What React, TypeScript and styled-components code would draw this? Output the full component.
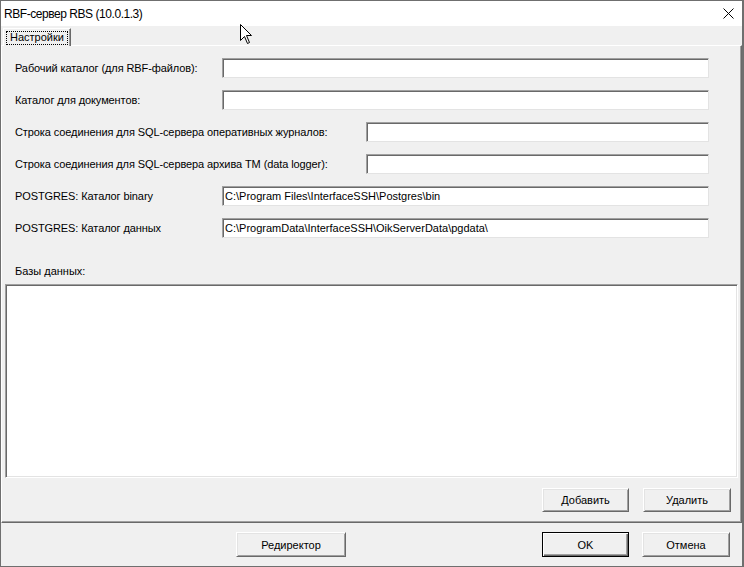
import React from 'react';
import styled, { createGlobalStyle } from 'styled-components';

const GlobalStyle = createGlobalStyle`
  html, body {
    margin: 0;
    padding: 0;
    background: #f0f0f0;
  }
  body {
    font-family: "Liberation Sans", Arial, sans-serif;
    font-size: 11px;
    color: #000;
  }
`;

const Window = styled.div`
  position: relative;
  width: 744px;
  height: 567px;
  box-sizing: border-box;
  border: 1px solid #6f6f6f;
  border-right-width: 2px;
  background: #f0f0f0;
  display: flex;
  flex-direction: column;
  overflow: hidden;
`;

const TitleBar = styled.div`
  height: 25px;
  flex-shrink: 0;
  background: #fff;
  display: flex;
  align-items: center;
  padding: 0 8px 0 3px;
`;

const Title = styled.span`
  flex: 1;
  font-size: 12px;
  letter-spacing: -0.45px;
  color: #000;
`;

const TabStrip = styled.div`
  height: 19px;
  flex-shrink: 0;
  display: flex;
  align-items: flex-end;
  padding-left: 2px;
  position: relative;
  z-index: 1;
`;

const Tab = styled.div`
  height: 18px;
  margin-bottom: -1px;
  box-sizing: border-box;
  padding: 2px 2px 0 2px;
  background: #f0f0f0;
  border-top: 1px solid #fff;
  border-left: 1px solid #fff;
  border-right: 1px solid #696969;
  box-shadow: inset -1px 0 0 #a0a0a0;
`;

const TabLabel = styled.span`
  display: block;
  padding: 0 4px;
  height: 14px;
  line-height: 13px;
  outline: 1px dotted #000;
  outline-offset: -1px;
`;

const Panel = styled.div`
  flex: 1;
  min-height: 0;
  display: flex;
  flex-direction: column;
  box-sizing: border-box;
  border-top: 1px solid #fff;
  border-left: 1px solid #fff;
  border-right: 1px solid #696969;
  border-bottom: 1px solid #696969;
  box-shadow: inset -1px -1px 0 #a0a0a0;
  padding: 12px 3px 10px 3px;
`;

const Form = styled.div`
  display: flex;
  flex-direction: column;
  gap: 12px;
  padding: 0 29px 0 10px;
`;

const Row = styled.div`
  display: flex;
  align-items: center;
  height: 20px;
`;

const Label = styled.span<{ $width: number }>`
  width: ${(p) => p.$width}px;
  flex-shrink: 0;
  white-space: nowrap;
  letter-spacing: -0.1px;
`;

const Field = styled.div`
  flex: 1;
  height: 20px;
  box-sizing: border-box;
  background: #fff;
  border: 1px solid;
  border-color: #a0a0a0 #e3e3e3 #e3e3e3 #a0a0a0;
  box-shadow: inset 1px 1px 0 #696969;
  padding: 0 1px 0 2px;
  display: flex;
  align-items: center;
  white-space: nowrap;
  overflow: hidden;
`;

const SectionLabel = styled.div`
  margin-top: 27px;
  padding-left: 10px;
  height: 13px;
  line-height: 13px;
`;

const ListBox = styled.div`
  margin-top: 6px;
  flex: 1;
  background: #fff;
  border: 1px solid;
  border-color: #a0a0a0 #fff #fff #a0a0a0;
  box-shadow: inset 1px 1px 0 #696969, inset -1px -1px 0 #e3e3e3;
`;

const ButtonRow = styled.div`
  display: flex;
  justify-content: flex-end;
  gap: 14px;
  margin-top: 10px;
  padding-right: 7px;
`;

const Button = styled.button<{ $width: number; $height?: number; $default?: boolean }>`
  width: ${(p) => p.$width}px;
  height: ${(p) => p.$height ?? 24}px;
  box-sizing: border-box;
  padding: 0;
  margin: 0;
  font-family: "Liberation Sans", Arial, sans-serif;
  font-size: 11px;
  color: #000;
  background: #f0f0f0;
  border: 1px solid;
  border-color: ${(p) => (p.$default ? '#000' : '#fff #696969 #696969 #fff')};
  box-shadow: ${(p) =>
    p.$default
      ? 'inset 1px 1px 0 #fff, inset -1px -1px 0 #696969, inset -2px -2px 0 #a0a0a0'
      : 'inset 1px 1px 0 #e3e3e3, inset -1px -1px 0 #a0a0a0'};
  cursor: default;
`;

const Footer = styled.div`
  height: 43px;
  flex-shrink: 0;
  box-sizing: border-box;
  display: flex;
  align-items: flex-start;
  gap: 13px;
  padding: 9px 12px 0 235px;
`;

const Spacer = styled.div`
  flex: 1;
`;

const Cursor = styled.svg`
  position: absolute;
  left: 239px;
  top: 23px;
  pointer-events: none;
`;

const CloseIcon = () => (
  <svg width="11" height="11" viewBox="0 0 11 11">
    <path d="M0.5 0.5 L10.5 10.5 M10.5 0.5 L0.5 10.5" stroke="#000" strokeWidth="1" fill="none" />
  </svg>
);

const rows = [
  { label: 'Рабочий каталог (для RBF-файлов):', width: 207, value: '' },
  { label: 'Каталог для документов:', width: 207, value: '' },
  { label: 'Строка соединения для SQL-сервера оперативных журналов:', width: 351, value: '' },
  { label: 'Строка соединения для SQL-сервера архива ТМ (data logger):', width: 351, value: '' },
  { label: 'POSTGRES: Каталог binary', width: 207, value: 'C:\\Program Files\\InterfaceSSH\\Postgres\\bin' },
  { label: 'POSTGRES: Каталог данных', width: 207, value: 'C:\\ProgramData\\InterfaceSSH\\OikServerData\\pgdata\\' },
];

export default function App() {
  return (
    <>
      <GlobalStyle />
      <Window>
        <TitleBar>
          <Title>RBF-сервер RBS (10.0.1.3)</Title>
          <CloseIcon />
        </TitleBar>
        <TabStrip>
          <Tab>
            <TabLabel>Настройки</TabLabel>
          </Tab>
        </TabStrip>
        <Panel>
          <Form>
            {rows.map((r) => (
              <Row key={r.label}>
                <Label $width={r.width}>{r.label}</Label>
                <Field>{r.value}</Field>
              </Row>
            ))}
          </Form>
          <SectionLabel>Базы данных:</SectionLabel>
          <ListBox />
          <ButtonRow>
            <Button $width={87}>Добавить</Button>
            <Button $width={88}>Удалить</Button>
          </ButtonRow>
        </Panel>
        <Footer>
          <Button $width={110} $height={25}>Редиректор</Button>
          <Spacer />
          <Button $width={87} $height={25} $default>OK</Button>
          <Button $width={88} $height={25}>Отмена</Button>
        </Footer>
        <Cursor width="13" height="21" viewBox="0 0 13 21">
          <path
            d="M0.5 0.5 L0.5 16.5 L4.5 12.5 L7.5 19.5 L9.5 18.5 L6.5 11.5 L11.5 11.5 Z"
            fill="#fff"
            stroke="#000"
            strokeWidth="1"
            strokeLinejoin="miter"
          />
        </Cursor>
      </Window>
    </>
  );
}
